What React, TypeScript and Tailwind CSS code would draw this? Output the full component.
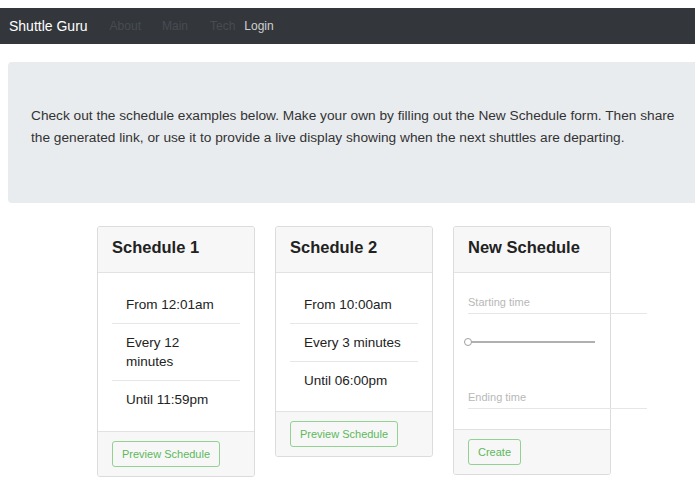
import React from "react";

function ListItem({ children, last }: { children: React.ReactNode; last?: boolean }) {
  return (
    <div
      className={
        "pl-[14px] pr-[14px] py-[9px] leading-[19px] text-[13.5px] text-[#222] " +
        (last ? "" : "border-b border-[#e6e6e6]")
      }
    >
      {children}
    </div>
  );
}

function Card({ title, children, footer }: { title: string; children: React.ReactNode; footer: React.ReactNode }) {
  return (
    <div className="w-[158px] border border-[#dcdcdc] rounded-[3px] bg-white">
      <div className="h-[46px] bg-[#f7f7f7] border-b border-[#e2e2e2] px-[14px] pt-[9px] rounded-t-[3px]">
        <div className="text-[16.5px] leading-[22px] font-bold text-[#222]">{title}</div>
      </div>
      {children}
      <div className="bg-[#f7f7f7] border-t border-[#e2e2e2] px-[14px] pt-[9px] pb-[9px] rounded-b-[3px]">{footer}</div>
    </div>
  );
}

function GreenButton({ children }: { children: React.ReactNode }) {
  return (
    <button className="h-[26px] px-[9px] border border-[#92d192] rounded-[3px] text-[11px] text-[#5cb85c] bg-transparent leading-[24px]">
      {children}
    </button>
  );
}

export default function App() {
  return (
    <div
      className="min-h-[494px] bg-white pt-[8px] overflow-hidden"
      style={{ fontFamily: '"Liberation Sans", Arial, sans-serif' }}
    >
      <nav className="h-[36px] bg-[#33373c] flex items-center pl-[9px]">
        <span className="text-[14px] text-white">Shuttle Guru</span>
        <span className="ml-[22px] text-[12px] text-[#474c52]">About</span>
        <span className="ml-[21px] text-[12px] text-[#474c52]">Main</span>
        <span className="ml-[22px] text-[12px] text-[#474c52]">Tech</span>
        <span className="ml-[9px] text-[12px] text-[#cfcfcf]">Login</span>
      </nav>

      <div className="mt-[18px] ml-[8px] bg-[#e9ecef] rounded-l-[4px] pl-[23px] pt-[43px] pb-[54px]">
        <p className="max-w-[655px] text-[13.7px] leading-[22px] text-[#333]">
          Check out the schedule examples below. Make your own by filling out the New Schedule form. Then share the
          generated link, or use it to provide a live display showing when the next shuttles are departing.
        </p>
      </div>

      <div className="mt-[23px] pl-[97px] flex items-start gap-[20px]">
        <Card title="Schedule 1" footer={<GreenButton>Preview Schedule</GreenButton>}>
          <div className="px-[14px] pt-[13px] pb-[13px]">
            <ListItem>From 12:01am</ListItem>
            <ListItem>Every 12 minutes</ListItem>
            <ListItem last>Until 11:59pm</ListItem>
          </div>
        </Card>

        <Card title="Schedule 2" footer={<GreenButton>Preview Schedule</GreenButton>}>
          <div className="px-[14px] pt-[13px] pb-[12px]">
            <ListItem>From 10:00am</ListItem>
            <ListItem>Every 3 minutes</ListItem>
            <ListItem last>Until 06:00pm</ListItem>
          </div>
        </Card>

        <Card title="New Schedule" footer={<GreenButton>Create</GreenButton>}>
          <div className="px-[14px] pt-[17px] pb-[20px]">
            <div className="w-[179px] h-[24px] border-b border-[#e6e6e6] text-[11px] leading-[24px] text-[#b8b8b8]">
              Starting time
            </div>
            <div className="relative mt-[23px] w-[127px] h-[10px]">
              <div className="absolute left-0 right-0 top-[4px] h-[2px] bg-[#b0b0b0]" />
              <div className="absolute left-[-4px] top-[1px] w-[8px] h-[8px] rounded-full border border-[#a0a0a0] bg-white" />
            </div>
            <div className="mt-[38px] w-[179px] h-[24px] border-b border-[#e6e6e6] text-[11px] leading-[24px] text-[#b8b8b8]">
              Ending time
            </div>
          </div>
        </Card>
      </div>
    </div>
  );
}
